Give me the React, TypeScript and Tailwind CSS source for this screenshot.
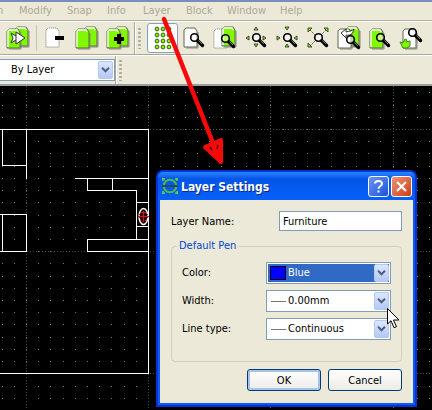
import { useState, ReactNode } from 'react'

const menus = [
  { label: 'Modify', width: 'w-[48px]' },
  { label: 'Snap', width: 'w-[40px]' },
  { label: 'Info', width: 'w-[36px]' },
  { label: 'Layer', width: 'w-[43px]' },
  { label: 'Block', width: 'w-[41px]' },
  { label: 'Window', width: 'w-[53px]' },
  { label: 'Help', width: 'w-[32px]' },
]

const GREEN = '#80f800'

function Page({ x, y, h = 19, fill = '#fff', dashed = false }: { x: number; y: number; h?: number; fill?: string; dashed?: boolean }) {
  return (
    <>
      {!dashed && <path d={`M${x + 2} ${y + h + 1}h12v-${h - 3}`} fill="none" stroke="#8a8a80" />}
      <path
        d={`M${x} ${y + 2}l2-2h9l2 3v${h - 3}H${x}z`}
        fill={fill}
        stroke={dashed ? '#777' : '#5c6650'}
        strokeDasharray={dashed ? '1 1' : undefined}
      />
      {!dashed && fill !== '#fff' && (
        <path d={`M${x + 1} ${y + h - 1}V${y + 2}l1-1h8l1 2`} fill="none" stroke="#fff" strokeWidth="1.4" />
      )}
    </>
  )
}

function Glass({ x, y }: { x: number; y: number }) {
  return (
    <g transform={`translate(${x} ${y})`}>
      <path d="M7.500 7.500l5 5" stroke="#000" strokeWidth="3.4" strokeLinecap="round" />
      <circle cx="4.5" cy="4.5" r="3.8" fill="#fff" fillOpacity="0.5" stroke="#000" strokeWidth="1.6" />
      <path d="M8.5 7.5l3.5 3.5" stroke="#999" strokeWidth="0.8" />
    </g>
  )
}

const tri = { fill: GREEN, stroke: '#222', strokeWidth: 0.8 }

function Tool({ label, pressed, children }: { label: string; pressed?: boolean; children: ReactNode }) {
  return (
    <button
      type="button"
      aria-label={label}
      aria-pressed={pressed}
      className={`flex h-[30px] w-[31px] shrink-0 items-center justify-center rounded-[3px] border ${
        pressed ? 'border-[#8ba0b8] bg-white' : 'border-transparent'
      }`}
    >
      <svg className="size-6 shrink-0" viewBox="0 0 24 24">
        {children}
      </svg>
    </button>
  )
}

function Grip() {
  return (
    <span className="mr-1.5 ml-0.5 h-[22px] w-[3px] shrink-0 bg-[radial-gradient(circle,#aaa695_1px,transparent_1.5px)] bg-[length:3px_4px]" />
  )
}

function Combo({
  id,
  options,
  icon,
  active,
}: {
  id: string
  options: string[]
  icon?: ReactNode
  active?: boolean
}) {
  return (
    <div className={`relative h-[22px] flex-1 border border-[#7f9db9] bg-white p-px ${icon ? '' : 'border-l-0'}`}>
      <select
        id={id}
        className={`block h-[18px] w-full appearance-none pr-4 text-[11px] leading-[18px] outline-none ${
          icon ? 'pl-5' : 'pl-2.5'
        } ${active ? 'bg-[#316ac5] text-white' : 'bg-white text-black'}`}
      >
        {options.map((o) => (
          <option key={o}>{o}</option>
        ))}
      </select>
      <span className="pointer-events-none absolute inset-y-0 left-[3px] flex items-center">{icon}</span>
      <span className="pointer-events-none absolute inset-y-px right-px flex w-[15px] items-center justify-center rounded-[2px] border border-[#b4c8f0] bg-linear-to-b from-[#dce6fd] to-[#b5c8f4]">
        <svg className="h-[6px] w-[9px] shrink-0" viewBox="0 0 9 6">
          <path d="M1 0.8l3.5 3.5L8 0.8" fill="none" stroke="#4d6185" strokeWidth="2" />
        </svg>
      </span>
    </div>
  )
}

function MenuBar() {
  return (
    <nav className="flex h-[21px] overflow-hidden border-t-2 border-b border-t-[#7a8bbd] border-b-[#b5b2a2] text-[11px] text-[#aca899]">
      <button type="button" className="w-[19px] shrink-0 text-left">
        <span className="-ml-[3px]">n</span>
      </button>
      {menus.map((m) => (
        <button key={m.label} type="button" className={`shrink-0 text-left ${m.width}`}>
          {m.label}
        </button>
      ))}
    </nav>
  )
}

function Toolbar() {
  return (
    <div className="flex h-[34px] items-center overflow-hidden border-t border-b border-t-white border-b-[#aca899] pl-0.5">
      <Tool label="Merge blocks">
        <Page x={9} y={1} fill={GREEN} />
        <Page x={1} y={3} fill={GREEN} />
        <path d="M5 7l5 3V6l9 6-9 6v-4l-5 3 2-5z" fill="#fff" stroke="#333" />
        <path d="M10 10v4" stroke="#333" />
      </Tool>
      <span className="mx-[3px] h-[26px] w-px shrink-0 bg-[#c5c2b2]" />
      <Tool label="Remove block">
        <Page x={2} y={2} dashed />
        <path d="M11 12h9" stroke="#000" strokeWidth="4" />
      </Tool>
      <Tool label="Rename block">
        <Page x={9} y={1} fill={GREEN} />
        <Page x={1} y={3} fill={GREEN} />
      </Tool>
      <Tool label="Insert block">
        <Page x={9} y={1} fill={GREEN} />
        <Page x={1} y={3} fill={GREEN} />
        <path d="M8 13h10M13 8v10" stroke="#000" strokeWidth="4" />
      </Tool>
      <span className="ml-px h-full w-0.5 shrink-0 border-l border-l-[#aca899] bg-white" />
      <Grip />
      <Tool label="Grid" pressed>
        {[3, 9, 15, 21].map((y) =>
          [6, 12, 18].map((x) => <circle key={`${x}-${y}`} cx={x} cy={y} r="1.9" fill={GREEN} stroke="#3c6010" />)
        )}
      </Tool>
      <Tool label="Redraw">
        <Page x={2} y={2} />
        <Glass x={8} y={7} />
      </Tool>
      <Tool label="Previous view">
        <Page x={1} y={3} dashed />
        <Page x={9} y={1} fill={GREEN} />
        <Glass x={8} y={8} />
      </Tool>
      <Tool label="Zoom in">
        <Glass x={8} y={7} />
        <path d="M10 4l2-3 2 3zM10 18h4l-2 3zM5 10v4l-3-2zM19 10v4l3-2z" {...tri} />
      </Tool>
      <Tool label="Zoom out">
        <Glass x={8} y={7} />
        <path d="M10 1h4l-2 3zM10 21l2-3 2 3zM2 10v4l3-2zM22 10v4l-3-2z" {...tri} />
      </Tool>
      <Tool label="Auto zoom">
        <path d="M4 4l5 5M20 4l-5 5M4 20l5-5" stroke="#555" strokeDasharray="2 1" />
        <path d="M2 2h4l-4 4zM18 2h4v4zM2 17v4h4z" {...tri} />
        <Glass x={8} y={7} />
      </Tool>
      <Tool label="Zoom previous">
        <Page x={9} y={1} fill={GREEN} />
        <Page x={1} y={3} />
        <path d="M4 7l5-4v3c4-1 6-1 8-3-1 5-4 7-8 6v3z" fill="#fff" stroke="#333" />
        <Glass x={9} y={9} />
      </Tool>
      <Tool label="Zoom window">
        <Page x={2} y={3} fill={GREEN} />
        <Glass x={8} y={7} />
      </Tool>
      <Tool label="Pan">
        <Page x={4} y={3} />
        <Glass x={9} y={2} />
        <path d="M1 16l3 1 2-4 2 1-1 2 4-1v5l-3 2H4z" fill={GREEN} stroke="#3c8a10" />
      </Tool>
    </div>
  )
}

function PenBar() {
  return (
    <div className="flex h-[31px] items-center border-t border-b-2 border-t-white border-b-[#9a9e9c]">
      <div className="flex w-[115px]">
        <label htmlFor="pen" className="sr-only">
          Pen
        </label>
        <Combo id="pen" options={['By Layer']} />
      </div>
      <span className="h-full w-0.5 border-l border-l-[#aca899] bg-white" />
      <Grip />
    </div>
  )
}

function Drawing() {
  const steps = Array.from({ length: 90 }, (_, i) => i)
  // minor grid is a tenth of the major grid
  const at = (start: number, i: number) => Math.floor(start + i * 12.22)
  return (
    <svg className="absolute inset-0 h-full w-full" shapeRendering="crispEdges">
      {steps.slice(0, 70).map((r) =>
        steps.slice(0, 80).map((c) => (
          <rect key={`${r}-${c}`} x={at(2, c)} y={at(6.8, r)} width="1" height="1" fill="#777" />
        ))
      )}
      <g stroke="#4a4a4a" strokeDasharray="1 2">
        {[26.5, 148.5, 270.5, 393.5].map((x) => (
          <line key={x} x1={x} y1="0" x2={x} y2="100%" />
        ))}
        {[43.5, 165.5, 287.5].map((y) => (
          <line key={y} x1="0" y1={y} x2="100%" y2={y} />
        ))}
      </g>
      <g fill="none" stroke="#fff">
        <path d="M0 43.500H148.500V287.500H0" />
        <path d="M2.500 43.500V79.500H26.500M26.500 43.500V93M0 128.500H26.500V165.500H0M2.500 128.500V165.500" />
        <path d="M75 92.500H148.500M87.500 92.500V104.500H136.500V153.500M112.500 92.500V104.500" />
        <path d="M136.500 116.500H148.500M136.500 140.500H148.500M148.500 153.500H87.500V165.500H148.500" />
        <ellipse cx="143.500" cy="130.500" rx="4.500" ry="8" fill="#200" strokeWidth="1.400" shapeRendering="auto" />
      </g>
      <g fill="none" stroke="#d01818">
        <circle cx="143.500" cy="130.500" r="4.500" strokeDasharray="2 1" />
        <path d="M138 130.500h11M143.500 125v11" />
      </g>
    </svg>
  )
}

function AppIcon() {
  return (
    <svg className="size-4 shrink-0" viewBox="0 0 16 16">
      <path d="M0 1h3M1 0v3M13 1h3M15 0v3M0 15h3M1 13v3M13 15h3M15 13v3" stroke="#66d040" strokeWidth="1.6" />
      <circle cx="8" cy="8" r="6.300" fill="none" stroke="#52b848" strokeWidth="2" />
      <path d="M0 8h16" stroke="#24504a" strokeWidth="2" />
    </svg>
  )
}

const line = <span className="ml-px h-px w-[15px] bg-[#777]" />

function LayerSettings() {
  const [name, setName] = useState('Furniture')
  const button =
    'h-[22px] w-[74px] rounded-[3px] border border-[#003c74] bg-linear-to-b from-white to-[#ecebe5] text-[11px] leading-none'
  const caption = 'flex size-[21px] items-center justify-center rounded-[3px] border border-white'

  return (
    <section
      aria-labelledby="dialog-title"
      className="absolute top-[84px] left-[156px] w-[261px] rounded-t-[7px] border-2 border-[#0831d9] bg-[#0a5cf0]"
    >
      <header className="flex h-7 items-center gap-[3px] rounded-t-[5px] bg-linear-to-b from-[#2a86fb] via-[#0455e8] via-25% to-[#0660fa] pr-[3px] pl-1">
        <AppIcon />
        <h1
          id="dialog-title"
          className="flex-1 pt-0.5 text-[12px] font-bold whitespace-nowrap text-white [text-shadow:1px_1px_#0a2a80]"
        >
          Layer Settings
        </h1>
        <div className="flex gap-0.5">
          <button type="button" aria-label="Help" className={`${caption} bg-linear-to-br from-[#6a96f5] to-[#1c50d8]`}>
            <svg className="size-[15px]" viewBox="0 0 15 15">
              <path d="M4 4.500C4 1.500 11 1 11 4.700C11 7 7.500 7 7.500 9.800M7.500 11.500v2" fill="none" stroke="#fff" strokeWidth="2" />
            </svg>
          </button>
          <button type="button" aria-label="Close" className={`${caption} bg-linear-to-br from-[#f09070] to-[#cc3a10]`}>
            <svg className="size-[15px]" viewBox="0 0 15 15">
              <path d="M3 3l9 9M12 3l-9 9" stroke="#fff" strokeWidth="2.200" />
            </svg>
          </button>
        </div>
      </header>

      <form
        onSubmit={(e) => e.preventDefault()}
        className="mx-0.5 mb-0.5 bg-[#ece9d8] px-[11px] pt-[11px] pb-3 text-[11px] text-black"
      >
        <div className="flex items-center">
          <label htmlFor="name" className="w-[108px] pt-0.5">
            Layer Name:
          </label>
          <input
            id="name"
            type="text"
            value={name}
            onChange={(e) => setName(e.target.value)}
            className="h-5 min-w-0 flex-1 border border-[#7f9db9] bg-white px-[3px] outline-none"
          />
        </div>
        <fieldset className="mt-[7px] rounded-[4px] border border-[#d0d0bf] px-2.5 pb-[21px]">
          <legend className="-ml-[5px] px-0.5 leading-4 text-[#0046d5]">Default Pen</legend>
          <div className="mt-2 flex flex-col gap-1.5">
            <div className="flex items-center">
              <label htmlFor="color" className="w-[84px]">
                Color:
              </label>
              <Combo id="color" options={['Blue']} active icon={<span className="h-3.5 w-4 border border-black bg-[#0000ff]" />} />
            </div>
            <div className="flex items-center">
              <label htmlFor="width" className="w-[84px]">
                Width:
              </label>
              <Combo id="width" options={['0.00mm']} icon={line} />
            </div>
            <div className="flex items-center">
              <label htmlFor="linetype" className="w-[84px]">
                Line type:
              </label>
              <Combo id="linetype" options={['Continuous']} icon={line} />
            </div>
          </div>
        </fieldset>
        <div className="mt-[7px] flex justify-end gap-[7px]">
          <button type="submit" className={`${button} shadow-[inset_0_0_0_2px_#a9c2f0]`}>
            OK
          </button>
          <button type="button" className={button}>
            Cancel
          </button>
        </div>
      </form>
    </section>
  )
}

export default function App() {
  return (
    <div className="relative flex min-h-screen flex-col overflow-hidden bg-[#ece9d8] font-['DejaVu_Sans_Condensed','DejaVu_Sans',sans-serif]">
      <MenuBar />
      <Toolbar />
      <PenBar />
      <main className="relative min-h-[324px] flex-1 bg-black">
        <Drawing />
        <LayerSettings />
        <svg className="pointer-events-none absolute top-[222px] left-[387px] h-[21px] w-[13px]" viewBox="0 0 13 21">
          <path d="M0.500 0.500V16l3.500-3.300 3 7 2.500-1-3-6.700H12z" fill="#fff" stroke="#000" />
        </svg>
      </main>
      <svg className="pointer-events-none absolute top-0 left-0 h-[170px] w-[240px]" viewBox="0 0 240 170">
        <path d="M164 19L213 143" stroke="#f80808" strokeWidth="4.500" strokeLinecap="round" />
        <path d="M205 147L221 140L221 162Z" fill="#f80808" stroke="#f80808" strokeWidth="4" strokeLinejoin="round" />
        <path d="M210 147l2 3M218 145l-1 4" stroke="#500" strokeWidth="1.500" />
      </svg>
    </div>
  )
}
